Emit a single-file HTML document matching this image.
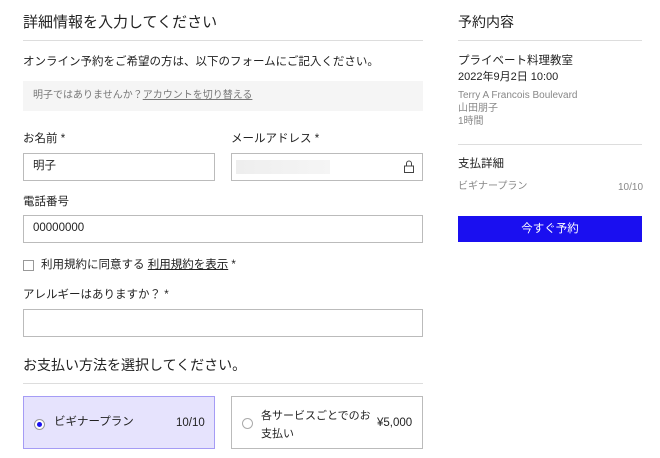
<!DOCTYPE html>
<html><head><meta charset="utf-8"><style>
*{margin:0;padding:0;box-sizing:border-box}
body{width:660px;height:458px;background:#fff;font-family:"Liberation Sans","Noto Sans CJK JP",sans-serif;color:#222;position:relative;overflow:hidden}
.a{position:absolute;white-space:nowrap;line-height:1}
.hr{position:absolute;height:1px;background:#ddd}
.in{position:absolute;border:1px solid #bbb;background:#fff}
.g{color:#888}
</style></head><body>
<div class="a" style="left:23px;top:15px;font-size:15px">詳細情報を入力してください</div>
<div class="hr" style="left:23px;top:40px;width:400px"></div>
<div class="a" style="left:23px;top:57px;font-size:11.5px">オンライン予約をご希望の方は、以下のフォームにご記入ください。</div>
<div style="position:absolute;left:23px;top:81px;width:400px;height:30px;background:#f5f5f5"></div>
<div class="a" style="left:33px;top:91px;font-size:10px;color:#777">明子ではありませんか？<span style="text-decoration:underline">アカウントを切り替える</span></div>
<div class="a" style="left:23px;top:134px;font-size:11.5px">お名前 *</div>
<div class="a" style="left:231px;top:134px;font-size:11.5px">メールアドレス *</div>
<div class="in" style="left:23px;top:153px;width:192px;height:28px"></div>
<div class="a" style="left:33px;top:161px;font-size:11.5px">明子</div>
<div class="in" style="left:231px;top:153px;width:192px;height:28px"></div>
<div style="position:absolute;left:236px;top:160px;width:94px;height:14px;background:linear-gradient(90deg,#eee,#f5f5f5)"></div>
<svg style="position:absolute;left:403px;top:159px" width="12" height="15" viewBox="0 0 12 15"><path d="M3.5 7V4.5a2.5 2.5 0 0 1 5 0V7" fill="none" stroke="#444" stroke-width="1"/><rect x="1.5" y="7" width="9" height="6.5" fill="none" stroke="#444" stroke-width="1"/></svg>
<div class="a" style="left:23px;top:197px;font-size:11.5px">電話番号</div>
<div class="in" style="left:23px;top:215px;width:400px;height:28px"></div>
<div class="a" style="left:33px;top:223px;font-size:11.5px">00000000</div>
<div style="position:absolute;left:23px;top:260px;width:11px;height:11px;border:1px solid #999"></div>
<div class="a" style="left:41px;top:260px;font-size:11.5px">利用規約に同意する <span style="text-decoration:underline">利用規約を表示</span> *</div>
<div class="a" style="left:23px;top:290px;font-size:11.5px">アレルギーはありますか？ *</div>
<div class="in" style="left:23px;top:309px;width:400px;height:28px"></div>
<div class="a" style="left:23px;top:358px;font-size:14px">お支払い方法を選択してください。</div>
<div class="hr" style="left:23px;top:383px;width:400px"></div>
<div style="position:absolute;left:23px;top:396px;width:192px;height:53px;background:#e6e3fd;border:1px solid #a59cf5"></div>
<div style="position:absolute;left:34px;top:419px;width:11px;height:11px;border:1px solid #999;border-radius:50%;background:#fff"></div>
<div style="position:absolute;left:37px;top:422px;width:5px;height:5px;border-radius:50%;background:#1a0ff0"></div>
<div class="a" style="left:54px;top:417px;font-size:11.5px">ビギナープラン</div>
<div class="a" style="left:176px;top:418px;font-size:11.5px">10/10</div>
<div style="position:absolute;left:231px;top:396px;width:192px;height:53px;border:1px solid #bbb"></div>
<div style="position:absolute;left:242px;top:418px;width:11px;height:11px;border:1px solid #aaa;border-radius:50%"></div>
<div class="a" style="left:261px;top:407px;font-size:11px;line-height:18px">各サービスごとでのお<br>支払い</div>
<div class="a" style="left:377px;top:418px;font-size:11.5px">¥5,000</div>
<div class="a" style="left:458px;top:15px;font-size:14px">予約内容</div>
<div class="hr" style="left:458px;top:40px;width:184px"></div>
<div class="a" style="left:458px;top:56px;font-size:11.5px">プライベート料理教室</div>
<div class="a" style="left:458px;top:72px;font-size:11px">2022年9月2日 10:00</div>
<div class="a g" style="left:458px;top:91px;font-size:10px">Terry A Francois Boulevard</div>
<div class="a g" style="left:458px;top:104px;font-size:10px">山田朋子</div>
<div class="a g" style="left:458px;top:117px;font-size:10px">1時間</div>
<div class="hr" style="left:458px;top:144px;width:184px"></div>
<div class="a" style="left:458px;top:159px;font-size:11.5px">支払詳細</div>
<div class="a g" style="left:458px;top:182px;font-size:10px">ビギナープラン</div>
<div class="a g" style="left:618px;top:183px;font-size:10px">10/10</div>
<div style="position:absolute;left:458px;top:216px;width:184px;height:26px;background:#1a0ff0;color:#fff;font-size:11.5px;text-align:center;line-height:26px">今すぐ予約</div>
</body></html>
